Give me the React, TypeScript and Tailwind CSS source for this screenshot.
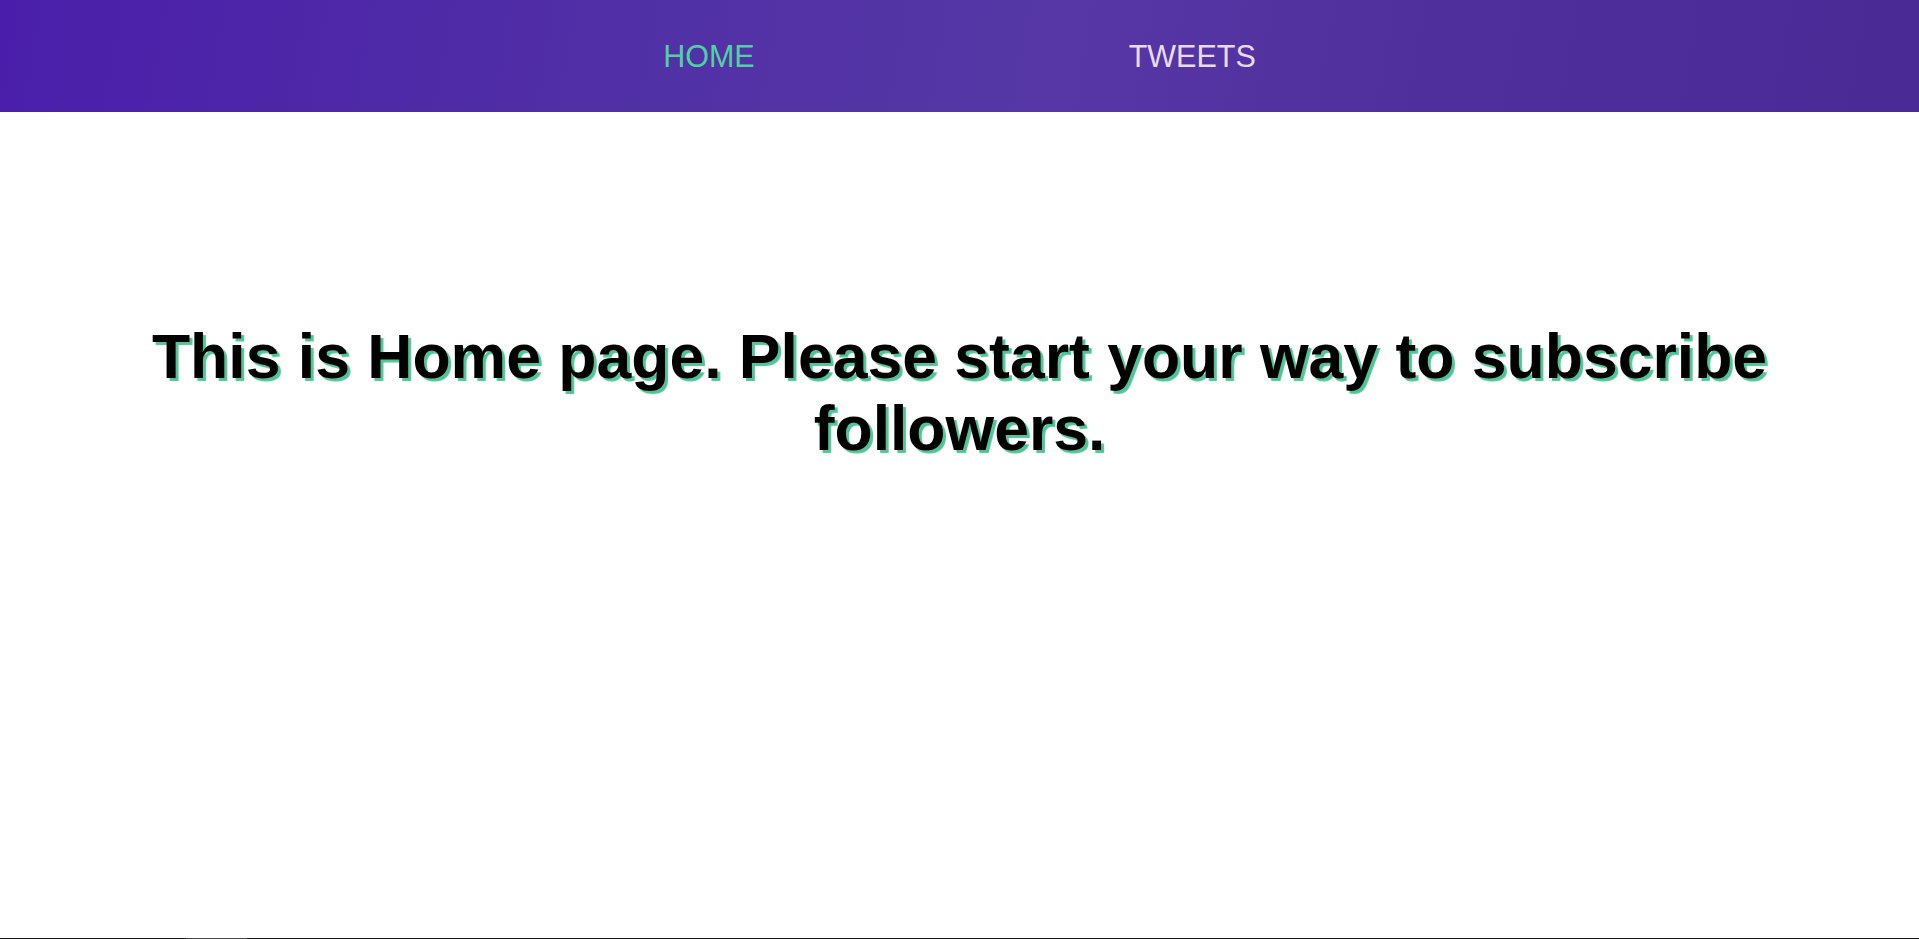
import React from "react";

export default function App() {
  return (
    <div className="flex h-[939px] w-full flex-col bg-white font-['Liberation_Sans',Arial,sans-serif]">
      <header className="flex h-[112px] w-full shrink-0 items-center justify-center gap-[374px] bg-[linear-gradient(100deg,#4a1eaa_0%,#5131a6_35%,#5637a5_55%,#4e2f9c_75%,#4a2a95_100%)]">
        <a className="text-[30.5px] leading-none text-[#50d1a0]" href="#">
          HOME
        </a>
        <a className="text-[30.5px] leading-none text-[#e8dbfa]" href="#">
          TWEETS
        </a>
      </header>
      <main className="flex flex-1 flex-col items-center">
        <h1 className="mt-[208px] px-4 text-center text-[62.5px] font-bold leading-[72px] text-black [text-shadow:3px_3px_1px_#4fc497]">
          This is Home page. Please start your way to subscribe followers.
        </h1>
      </main>
      <div className="flex h-px w-full shrink-0 bg-[#1c1c1c]">
        <div className="ml-[186px] h-px w-[61px] bg-[#474747]" />
      </div>
    </div>
  );
}
